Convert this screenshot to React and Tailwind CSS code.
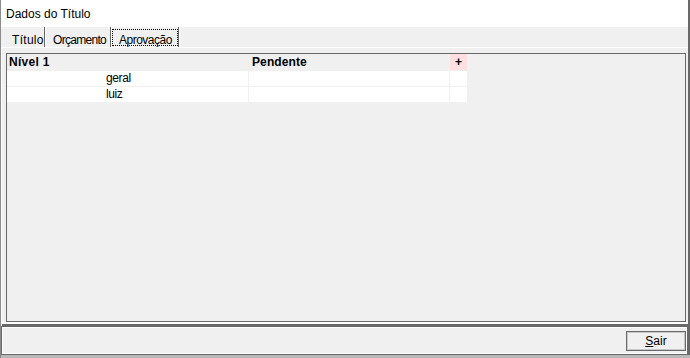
import React from "react";

const font = { fontFamily: '"Liberation Sans", Arial, sans-serif' };

export default function App() {
  const rows = ["geral", "luiz"];
  return (
    <div
      className="w-[690px] h-[358px] bg-[#f0f0f0] flex flex-col border-l border-l-[#8c8c8c] overflow-hidden text-black"
      style={font}
    >
      <div className="flex flex-col border-r-2 border-r-[#696969]">
        {/* Title */}
        <div className="h-[27px] bg-white pl-[5px] flex items-center text-[12px] leading-[14px]">
          Dados do Título
        </div>

        {/* Tabs */}
        <div className="h-[21px] flex border-b border-b-white text-[12px] leading-[14px]">
          <div className="w-[5px]" />
          <div className="w-[39px] pl-[6px] pt-[6px] border-r border-r-[#696969] tracking-[0.3px]">Título</div>
          <div className="w-[66px] pl-[7px] pt-[6px] border-l border-l-white border-r border-r-[#696969] tracking-[-0.7px] whitespace-nowrap">Orçamento</div>
          <div className="relative w-[68px] pl-[7px] pt-[6px] border-l border-l-white border-r border-r-[#696969] tracking-[-0.5px] whitespace-nowrap">
            Aprovação
            <div className="absolute left-0 right-0 top-[2px] bottom-[1px] border border-dotted border-black" />
          </div>
          <div className="w-px bg-white" />
        </div>

        {/* Content */}
        <div className="h-[278px] flex flex-col border-l border-l-white">
          <div className="pt-[5px] pl-[4px] pr-[2px]">
            <div className="h-[269px] border border-[#696969] bg-[#f0f0f0]">
              <div className="w-[460px] flex flex-col gap-px bg-[#f0f0f0]">
                <div className="grid grid-cols-[241px_200px_17px] gap-x-px h-[16px] items-center text-[12px] font-bold leading-[14px]">
                  <div className="pl-[2px] tracking-[0.3px]">Nível 1</div>
                  <div className="pl-[3px] tracking-[0.1px]">Pendente</div>
                  <div className="h-[16px] bg-[#ffdfdf] flex items-center justify-center text-[12px]">+</div>
                </div>
                {rows.map((r) => (
                  <div key={r} className="grid grid-cols-[241px_200px_17px] gap-x-px h-[15px] text-[12px] leading-[15px] tracking-[-0.4px]">
                    <div className="bg-white pl-[99px]">{r}</div>
                    <div className="bg-white" />
                    <div className="bg-white" />
                  </div>
                ))}
              </div>
            </div>
          </div>
          <div className="h-[2px] bg-white" />
          <div className="h-[2px] bg-[#696969]" />
        </div>

        {/* Bottom bar */}
        <div className="h-[29px] border border-[#696969] shadow-[inset_0_0_0_1px_#ffffff] flex justify-end items-start pt-[4px] pr-[1px]">
          <button className="w-[60px] h-[20px] border border-[#6a6a6a] shadow-[inset_0_0_0_1px_#c8c8c8] bg-[#f0f0f0] text-[12px] leading-[14px] flex items-center justify-center">
            <span><span className="underline">S</span>air</span>
          </button>
        </div>
      </div>
      <div className="h-[3px] bg-[#b9b9b9]" />
    </div>
  );
}
